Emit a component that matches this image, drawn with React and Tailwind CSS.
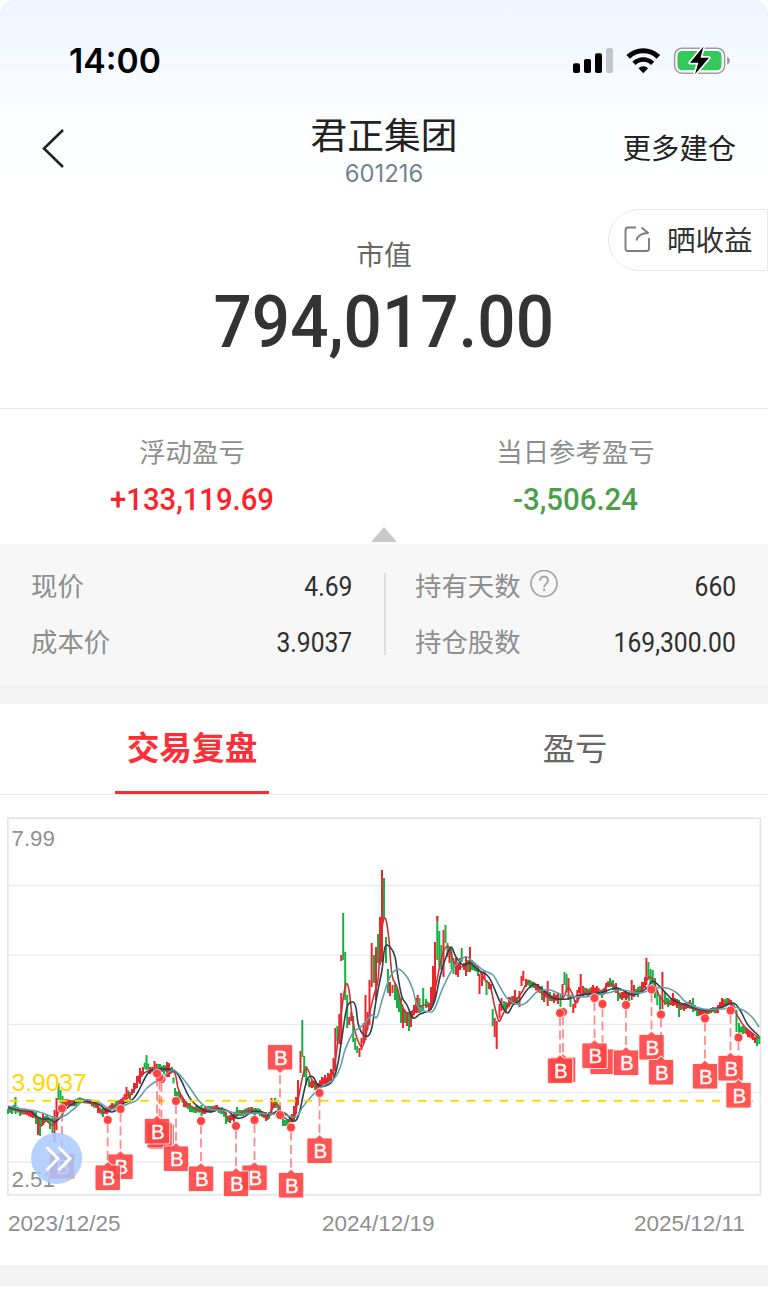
const CJK = "font-['Noto_Sans_CJK_SC',sans-serif]";

// x, high, low, colour (r = up, g = down)
const CANDLES = `8 1109 1114 g|12 1106 1114 g|15.5 1097 1114 g|20 1108 1116 g|27 1109 1115 r|33 1111 1118 r|36 1112 1124 g|38 1118 1135 r|40 1117 1136 g|43 1114 1125 r|47 1114 1121 g|50 1120 1129 g|52.5 1117 1133 g|54.5 1110 1142 r|56.5 1098 1130 r|58.5 1083 1100 g|60.5 1090 1103 g|62.5 1096 1103 g|66 1099 1107 r|70 1100 1106 r|76 1099 1106 g|82 1098 1103 g|90 1101 1104 r|96 1102 1108 g|98 1104 1113 r|103 1108 1117 g|107 1108 1114 r|112 1103 1110 r|116 1101 1108 g|121 1099 1107 r|126.5 1087 1099 r|130 1092 1100 g|134 1083 1093 r|137 1076 1088 r|140 1068 1084 r|143 1067 1075 r|146.5 1055 1070 g|150 1067 1074 r|154.5 1061 1073 r|160 1064 1071 g|164 1065 1074 g|167 1062 1077 r|169 1063 1077 r|172 1067 1073 g|175 1088 1096 g|179 1091 1101 g|184 1099 1107 r|190 1103 1112 g|196 1106 1113 g|201.5 1105 1116 g|205 1107 1114 r|210 1106 1113 g|217 1105 1111 r|222 1107 1114 g|226 1112 1124 g|230 1115 1123 r|234 1112 1122 r|237 1107 1117 g|245 1109 1115 g|252 1107 1113 r|255 1108 1116 g|260 1109 1116 g|266 1112 1121 r|269 1112 1119 g|271.5 1098 1115 r|275 1098 1108 g|280 1106 1117 g|283 1118 1126 g|288 1119 1125 g|292 1114 1122 r|294 1106 1120 r|296 1097 1114 r|298 1080 1105 r|300.5 1051 1073 r|302.3 1020 1057 g|304.2 1056 1077 g|306.2 1066 1085 g|309 1079 1087 g|312 1080 1088 r|315 1081 1090 g|318 1083 1090 r|322 1077 1087 r|325 1075 1085 r|328 1073 1085 r|331 1069 1082 r|333.5 1058 1078 r|335.3 1028 1071 r|337.3 1026 1041 g|339.3 1014 1044 r|341.2 993 1044 r|343.2 913 960 g|345.2 952 1000 g|347.2 995 1028 g|349.2 1017 1025 r|351.2 1012 1021 r|353.2 1016 1042 g|355.2 1038 1050 g|357.2 1046 1053 g|359.5 1048 1057 r|361.5 1038 1050 r|363.5 1023 1043 r|365.5 995 1040 r|367.5 1012 1030 r|369.5 980 1025 r|371.7 943 987 r|374 955 983 g|376 947 1000 r|378 934 963 g|380 917 965 r|382 870 962 r|384 878 919 g|386 937 963 g|388 969 993 g|390 982 996 r|392.5 985 993 r|395 983 1000 g|397 988 1008 g|399 995 1012 g|401 998 1023 g|403 1008 1028 r|405 1010 1023 g|407 1012 1026 r|409 1012 1031 g|411 1011 1027 r|414 1005 1015 r|416 998 1013 r|417.7 995 1013 r|419.5 998 1013 g|421.2 1005 1012 g|423.2 988 1010 g|426 999 1008 g|429 1003 1011 r|431 987 1010 r|433 966 1005 r|435 942 1000 r|437.3 916 960 g|439.3 931 967 g|441.3 945 970 g|443.5 930 977 r|445.5 925 943 g|447.5 943 957 g|449.5 947 963 r|451.5 948 969 g|453.5 958 974 g|456 958 975 r|458 963 977 r|460 958 970 r|461.7 948 962 g|464 963 970 r|466 957 976 r|468 960 972 g|470 947 972 r|472 960 970 g|475 964 971 g|478 966 976 g|479.5 974 994 r|482 973 986 r|484.5 971 980 r|486.5 980 995 g|489 982 989 r|491 984 990 r|492.7 1009 1026 g|494.7 1018 1037 r|496.7 1021 1049 r|499.5 1004 1018 r|501.5 998 1011 r|504 1001 1010 g|506 1002 1013 g|509 997 1007 r|512 996 1004 g|515 990 1004 r|517 997 1005 g|519.5 991 1007 r|521.5 976 986 r|523.3 971 981 r|526 979 987 r|530 980 988 g|534 982 988 g|538 984 992 r|542 986 1000 g|544 990 1002 r|547.7 981 1006 r|550 992 1001 g|554 993 1003 r|558 993 1004 r|560.5 995 1007 g|562.5 984 1000 r|564.5 972 985 g|566.5 974 992 g|568.5 978 1000 r|570.5 995 1007 g|573.3 1004 1013 r|575.3 1000 1008 r|577.3 990 1003 r|580.7 974 995 r|583 986 996 r|588 989 996 g|593 985 993 r|597 986 994 r|602 991 998 g|606 983 993 r|610 978 987 g|613 980 990 g|616 983 993 r|618 988 1001 g|622 992 1000 r|626 990 1000 r|629 992 1001 g|631.7 980 1000 r|634 985 997 r|638 987 997 g|642 982 993 r|645 977 988 r|646.4 958 985 r|648.4 962 980 g|650.5 969 984 g|652.7 970 988 g|655 978 998 g|657.3 990 1005 g|660 995 1010 g|662.4 972 1009 r|665 992 1005 g|668 998 1007 g|673 993 1006 r|677 999 1008 r|679 1000 1017 g|684 1003 1011 r|690 1000 1008 r|693 998 1012 g|697 1008 1016 g|701 1010 1015 r|707 1010 1015 r|713 1007 1012 g|718 1005 1013 r|722 998 1006 r|727 998 1004 g|731 1000 1008 r|734 1005 1012 g|736.5 1010 1032 g|739 1023 1033 g|743 1026 1034 g|748 1030 1037 r|753 1033 1040 r|757 1037 1046 g|759.3 1036 1044 g`
  .split('|')
  .map((row) => {
    const [x, top, bottom, color] = row.split(' ');
    return { x: +x, top: +top, bottom: +bottom, color };
  });

// put quiet sessions between the listed ones so there is a bar every 2px
const bars = CANDLES.flatMap((c, i) => {
  const next = CANDLES[i + 1];
  if (!next) return [c];
  const extra = Math.max(0, Math.round((next.x - c.x) / 2) - 1);
  const out = [c];
  for (let k = 1; k <= extra; k++) {
    const t = k / (extra + 1);
    const wob = ((i * 7 + k * 5) % 5) - 2;
    const top = c.top + (next.top - c.top) * t;
    const bottom = c.bottom + (next.bottom - c.bottom) * t;
    const mid = (top + bottom) / 2 + wob * 0.5;
    const half = Math.min((bottom - top) / 2, 3);
    out.push({
      x: c.x + (next.x - c.x) * t,
      top: mid - half,
      bottom: mid + half,
      color: (i + k) % 2 ? c.color : next.color,
    });
  }
  return out;
});

const MA_SHORT = '8,1108 20,1111 30,1112 36,1117 41,1126 46,1121 52,1125 56,1122 60,1106 68,1102 80,1101 92,1102 98,1108 104,1113 110,1108 118,1105 128,1098 134,1090 141,1076 148,1071 160,1070 174,1072 178,1088 184,1100 192,1107 205,1112 215,1108 224,1112 230,1120 238,1114 248,1111 258,1111 267,1117 272,1109 277,1104 282,1115 290,1121 294,1119 298,1100 303,1075 306,1068 309,1072 312,1080 320,1086 328,1082 334,1068 338,1040 343,1000 346,984 349,990 352,1015 356,1035 362,1047 366,1035 370,1012 374,995 378,980 380,950 383,922 386,920 389,940 392,975 397,987 402,1005 408,1014 416,1008 424,1005 431,1005 436,985 440,965 444,950 449,947 453,960 458,968 465,965 472,962 478,968 485,980 490,985 495,1008 499,1021 503,1014 508,1006 516,1000 522,992 528,982 536,986 545,996 556,999 563,998 568,988 572,993 576,1003 581,995 590,992 600,992 610,984 616,988 622,998 632,993 642,990 648,978 653,980 659,995 666,1003 680,1005 695,1009 710,1011 722,1006 731,1003 737,1015 744,1026 752,1033 759,1038';
const MA_MID = '8,1107 20,1110 30,1111 36,1116 42,1119 50,1119 54,1122 60,1118 66,1109 74,1103 82,1101 92,1102 100,1105 106,1110 112,1112 118,1109 124,1103 132,1100 138,1092 145,1078 150,1071 157,1069 166,1069 175,1071 181,1080 187,1093 192,1101 200,1108 210,1112 220,1109 228,1111 236,1118 244,1117 252,1112 262,1112 270,1115 278,1111 286,1114 293,1121 297,1119 300,1110 305,1087 308,1078 313,1077 318,1085 325,1086 333,1080 338,1063 342,1037 347,1007 353,1002 356,1008 358,1023 362,1033 368,1036 372,1027 375,1007 378,990 382,970 385,947 390,947 395,957 398,977 402,997 407,1005 413,1018 420,1014 430,1010 435,1000 440,977 445,960 451,947 456,957 463,965 470,963 478,970 487,975 492,983 497,995 503,1008 508,1013 513,1005 520,1000 527,990 535,984 543,990 553,998 567,999 580,995 600,993 617,988 633,995 647,988 653,981 663,990 673,1000 687,1005 703,1010 720,1008 733,1003 740,1010 748,1025 759,1036';
const MA_LONG = '8,1106 20,1109 36,1111 50,1116 58,1118 66,1115 76,1107 85,1100 98,1102 110,1109 122,1106 130,1103 137,1100 147,1088 155,1082 163,1077 172,1070 180,1075 190,1088 200,1102 210,1109 227,1111 240,1114 255,1113 270,1114 285,1115 296,1117 302,1108 310,1098 320,1088 333,1080 340,1068 345,1050 353,1033 363,1025 372,1015 377,1017 383,997 390,977 398,969 407,977 413,990 418,1007 430,1012 435,1008 442,990 452,970 465,957 473,962 483,970 493,975 500,987 508,999 520,1005 527,1002 537,992 550,990 563,995 583,997 607,993 623,990 640,993 657,988 667,988 677,993 687,1003 703,1009 723,1009 733,1007 743,1010 752,1017 759,1027';

const smooth = (str) => {
  const p = str.split(' ').map((s) => s.split(',').map(Number));
  let d = `M${p[0][0]} ${p[0][1]}`;
  for (let i = 0; i < p.length - 1; i++) {
    const a = p[i - 1] || p[i];
    const b = p[i];
    const c = p[i + 1];
    const e = p[i + 2] || c;
    d += `C${b[0] + (c[0] - a[0]) / 6} ${b[1] + (c[1] - a[1]) / 6} ${c[0] - (e[0] - b[0]) / 6} ${c[1] - (e[1] - b[1]) / 6} ${c[0]} ${c[1]}`;
  }
  return d;
};

// buy points in paint order, the third value marks flags buried under another one
const BUYS = [
  [62, 1108.5], [120.5, 1109], [107.7, 1120], [161.5, 1079, 1], [159.5, 1077.5, 1], [157, 1073.5],
  [176, 1101], [201, 1121], [254.5, 1120], [236, 1126], [291, 1127.5], [319.5, 1093],
  [563, 1012, 1], [560, 1013], [602.5, 1004, 1], [626, 1005], [594.5, 998], [651.5, 989.5],
  [661, 1014.5], [705, 1018.5], [730.5, 1010.5], [738.5, 1037.5],
];

const Buy = ({ x, y, up, buried }) => {
  const top = up ? y - 70.5 : y + 45;
  const left = x - 12.7;
  return (
    <g>
      <line x1={x} x2={x} y1={up ? y - 4 : y + 4} y2={up ? y - 42 : y + 42} stroke="#ff4d4d" strokeOpacity="0.65" strokeWidth="1.8" strokeDasharray="9 4.5" />
      <path
        d={
          up
            ? `M${left + 1.5} ${top}h22.5q1.5 0 1.5 1.5v22.5q0 1.5 -1.5 1.5h-7.5l-3.8 3.5l-3.8 -3.5h-7.4q-1.5 0 -1.5 -1.5v-22.5q0 -1.5 1.5 -1.5z`
            : `M${left + 1.5} ${top}h7.4l3.8 -3.5l3.8 3.5h7.5q1.5 0 1.5 1.5v22.5q0 1.5 -1.5 1.5h-22.5q-1.5 0 -1.5 -1.5v-22.5q0 -1.5 1.5 -1.5z`
        }
        fill="#ff4242"
        fillOpacity="0.9"
        stroke="#fff"
        strokeOpacity="0.8"
        strokeWidth="1.2"
      />
      {!buried && (
        <text x={x + 0.8} y={top + 20.3} fontSize="20.5" fill="#fff" stroke="#fff" strokeWidth="0.3" textAnchor="middle">B</text>
      )}
      <circle cx={x} cy={y} r="4.5" fill="#ff4242" stroke="#fff" strokeOpacity="0.7" strokeWidth="1" />
    </g>
  );
};

const Chart = () => (
  <svg className="block font-['Liberation_Sans',sans-serif]" width="768" height="410" viewBox="0 795 768 410">
    {[885.5, 955.2, 1024.5, 1092.3, 1162].map((y) => (
      <line key={y} x1="8" x2="760" y1={y} y2={y} stroke="#ebebf3" strokeWidth="1.3" />
    ))}
    <rect x="7.8" y="818.2" width="752.6" height="376.6" fill="none" stroke="#e3e5ec" strokeWidth="1.7" />
    <text x="11.5" y="845.5" fontSize="22.3" fill="#8f8f8f">7.99</text>
    <text x="11.5" y="1186.5" fontSize="22.3" fill="#8f8f8f">2.51</text>
    {bars.map((b, i) => (
      <rect key={i} x={b.x - 1} y={b.top} width="2" height={b.bottom - b.top} fill={b.color === 'r' ? '#f0252b' : '#14b143'} />
    ))}
    <rect x="340.2" y="955" width="2" height="6" fill="#f0252b" />
    <rect x="436.3" y="916" width="2" height="5" fill="#f0252b" />
    <path d={smooth(MA_SHORT)} fill="none" stroke="#cb3234" strokeWidth="1.6" />
    <path d={smooth(MA_MID)} fill="none" stroke="#2c3e50" strokeWidth="1.6" />
    <path d={smooth(MA_LONG)} fill="none" stroke="#61a0a8" strokeWidth="1.6" />
    <line x1="9.7" x2="760" y1="1100.7" y2="1100.7" stroke="#ffd500" strokeWidth="1.9" strokeDasharray="8.4 7.93" />
    <text x="11.5" y="1091" fontSize="24.6" fill="#ffd500">3.9037</text>
    <Buy x={280} y={1115} up />
    {BUYS.map(([x, y, buried]) => (
      <Buy key={x} x={x} y={y} buried={buried} />
    ))}
    <circle cx="56.6" cy="1158.3" r="25.6" fill="#a9c9ff" fillOpacity="0.85" />
    <path d="M46.5 1147l11.5 11.6l-11.5 11.6M58.5 1147l11.5 11.6l-11.5 11.6" fill="none" stroke="#fff" strokeWidth="3" />
  </svg>
);

const StatusIcons = () => (
  <svg width="160" height="30" viewBox="572 46 160 30">
    <rect x="573" y="63.3" width="7" height="9.7" rx="2" />
    <rect x="584" y="59" width="7" height="14" rx="2" />
    <rect x="595" y="53.3" width="7" height="19.7" rx="2" />
    <rect x="606" y="48" width="7" height="25" rx="2" fill="#c3c6cb" />
    <path d="M628.2 56.9a21.500 21.500 0 0 1 30.200 0" fill="none" stroke="#000" strokeWidth="5" />
    <path d="M634 63.400a13 13 0 0 1 18.600 0" fill="none" stroke="#000" strokeWidth="4.6" />
    <path d="M643.3 73.2l-4.8 -4.9a6.9 6.9 0 0 1 9.6 0z" />
    <rect x="674.6" y="48.2" width="50" height="25" rx="7.5" fill="#fff" stroke="#9a9da2" strokeWidth="1.5" />
    <rect x="677.5" y="51" width="44" height="19.3" rx="4.500" fill="#34c759" />
    <path d="M727.2 56.8q2.600 1.600 2.600 4t-2.600 4z" fill="#8f9297" />
    <path d="M703.500 46.500L690 62.800h8.300l-3.300 11.400l14 -16.400h-8.500z" stroke="#fff" strokeWidth="3.4" strokeLinejoin="round" paintOrder="stroke" />
  </svg>
);

const Row = ({ label, value, help }) => (
  <div className="flex h-14 items-center justify-between">
    <span className="-mt-0.5 flex items-center gap-2 text-[26.4px] text-[#8e8e8e]">
      {label}
      {help && (
        <svg width="30" height="30" viewBox="0 0 30 30" fill="none" stroke="#a0a0a0">
          <circle cx="15" cy="13.5" r="13" strokeWidth="1.6" />
          <path d="M11.2 10.700q0 -4 3.9 -4t3.9 3.8q0 2 -2 3.6t-1.9 3.3" strokeWidth="1.8" />
          <path d="M15.1 18.700v2.3" strokeWidth="2" />
        </svg>
      )}
    </span>
    <span className="mt-[3px] origin-right scale-x-[0.9] font-['Roboto',sans-serif] text-[27.4px] text-[#2f2f2f]">{value}</span>
  </div>
);

const App = () => (
  <div className={`relative h-[1293px] w-[768px] overflow-hidden bg-white ${CJK}`}>
    <header className="h-[208px] rounded-t-[14px] bg-[linear-gradient(#f0f5fe_0px,#f2f6ff_38px,#f7fbff_75px,#fbfdff_120px,#ffffff_190px)]">
      <div className="flex h-[108px] items-center justify-between pt-[14px] pr-9 pl-[69px]">
        <span className="font-['Inter',sans-serif] text-[33.7px] font-semibold text-black">14:00</span>
        <StatusIcons />
      </div>
      <div className="grid grid-cols-3 items-center">
        <svg className="ml-[40px]" width="28" height="44" viewBox="0 0 28 44" fill="none" stroke="#222" strokeWidth="2.6">
          <path d="M23 3L4 21.5L23 40" />
        </svg>
        <div className="flex flex-col items-center">
          <h1 className="text-[36.7px] leading-[50px] text-[#222]">君正集团</h1>
          <span className="font-['Inter',sans-serif] text-[23.8px] leading-[32px] text-[#748391]">601216</span>
        </div>
        <span className="-mt-[3px] pr-8 text-right text-[28.3px] text-[#222]">更多建仓</span>
      </div>
    </header>

    <button className="absolute top-[209px] right-0 flex h-[62px] w-[160px] items-center gap-4 rounded-l-full border border-[#e8e8e8] bg-white pb-px pl-[14px] text-[28.5px] text-[#333]">
      <svg className="-mt-0.5" width="28" height="28" viewBox="0 0 28 28" fill="none" stroke="#7c7c7c" strokeWidth="1.9">
        <path d="M13 2.500H5Q2.500 2.500 2.500 5V23.500Q2.500 26 5 26H23.500Q26 26 26 23.500V13" />
        <path d="M13.500 15.500Q15 8.200 25.500 8M18.500 2.500L25.500 8.200" />
      </svg>
      晒收益
    </button>

    <section className="flex h-[201px] flex-col items-center border-b border-[#e8e8e8] pt-[25px]">
      <span className="text-[27.8px] leading-[40px] text-[#666]">市值</span>
      <span className="mt-[3px] scale-x-[0.937] font-['Roboto',sans-serif] text-[72px] leading-[94px] font-medium text-[#333]">794,017.00</span>
    </section>

    <section className="relative grid h-[135px] grid-cols-2 pt-[21px] text-center">
      <div>
        <div className="text-[26.4px] leading-[42px] text-[#8e8e8e]">浮动盈亏</div>
        <div className="mt-[3px] scale-x-[0.943] font-['Roboto',sans-serif] text-[31px] leading-[50px] font-medium text-[#fd2229]">+133,119.69</div>
      </div>
      <div className="-ml-px">
        <div className="text-[26.4px] leading-[42px] text-[#8e8e8e]">当日参考盈亏</div>
        <div className="mt-[3px] scale-x-[0.95] font-['Roboto',sans-serif] text-[31px] leading-[50px] font-medium text-[#4c9f48]">-3,506.24</div>
      </div>
      <svg className="absolute bottom-[2px] left-[371px]" width="26" height="15" viewBox="0 0 26 15">
        <path d="M13 0L26 15H0z" fill="#c9c9c9" />
      </svg>
    </section>

    <section className="flex h-[141px] bg-[#f7f7f7] pt-[14px]">
      <div className="w-[384px] pr-8 pl-[31px]">
        <Row label="现价" value="4.69" />
        <Row label="成本价" value="3.9037" />
      </div>
      <div className="mt-[15px] h-[82px] w-0.5 bg-[#dedede]" />
      <div className="flex-1 pr-8 pl-[29px]">
        <Row label="持有天数" value="660" help />
        <Row label="持仓股数" value="169,300.00" />
      </div>
    </section>
    <div className="h-[19px] bg-[#f3f3f3]" />

    <nav className="grid h-[91px] grid-cols-2 justify-items-center border-b border-[#e8e8e8]">
      <span className="flex w-[154px] justify-center border-b-[3px] border-[#f62d34] pb-[3px] text-[32.7px] leading-[84px] font-bold text-[#fb2f37]">交易复盘</span>
      <span className="-ml-0.5 text-[32.3px] leading-[84px] text-[#666]">盈亏</span>
    </nav>

    <Chart />
    <div className="flex h-[60px] justify-between pt-0.5 pr-[23px] pl-2 font-['Liberation_Sans',sans-serif] text-[22.5px] text-[#8f8f8f]">
      <span>2023/12/25</span>
      <span className="pl-0.5">2024/12/19</span>
      <span>2025/12/11</span>
    </div>
    <div className="h-[21px] bg-[#f3f3f3]" />
  </div>
);

export default App;
